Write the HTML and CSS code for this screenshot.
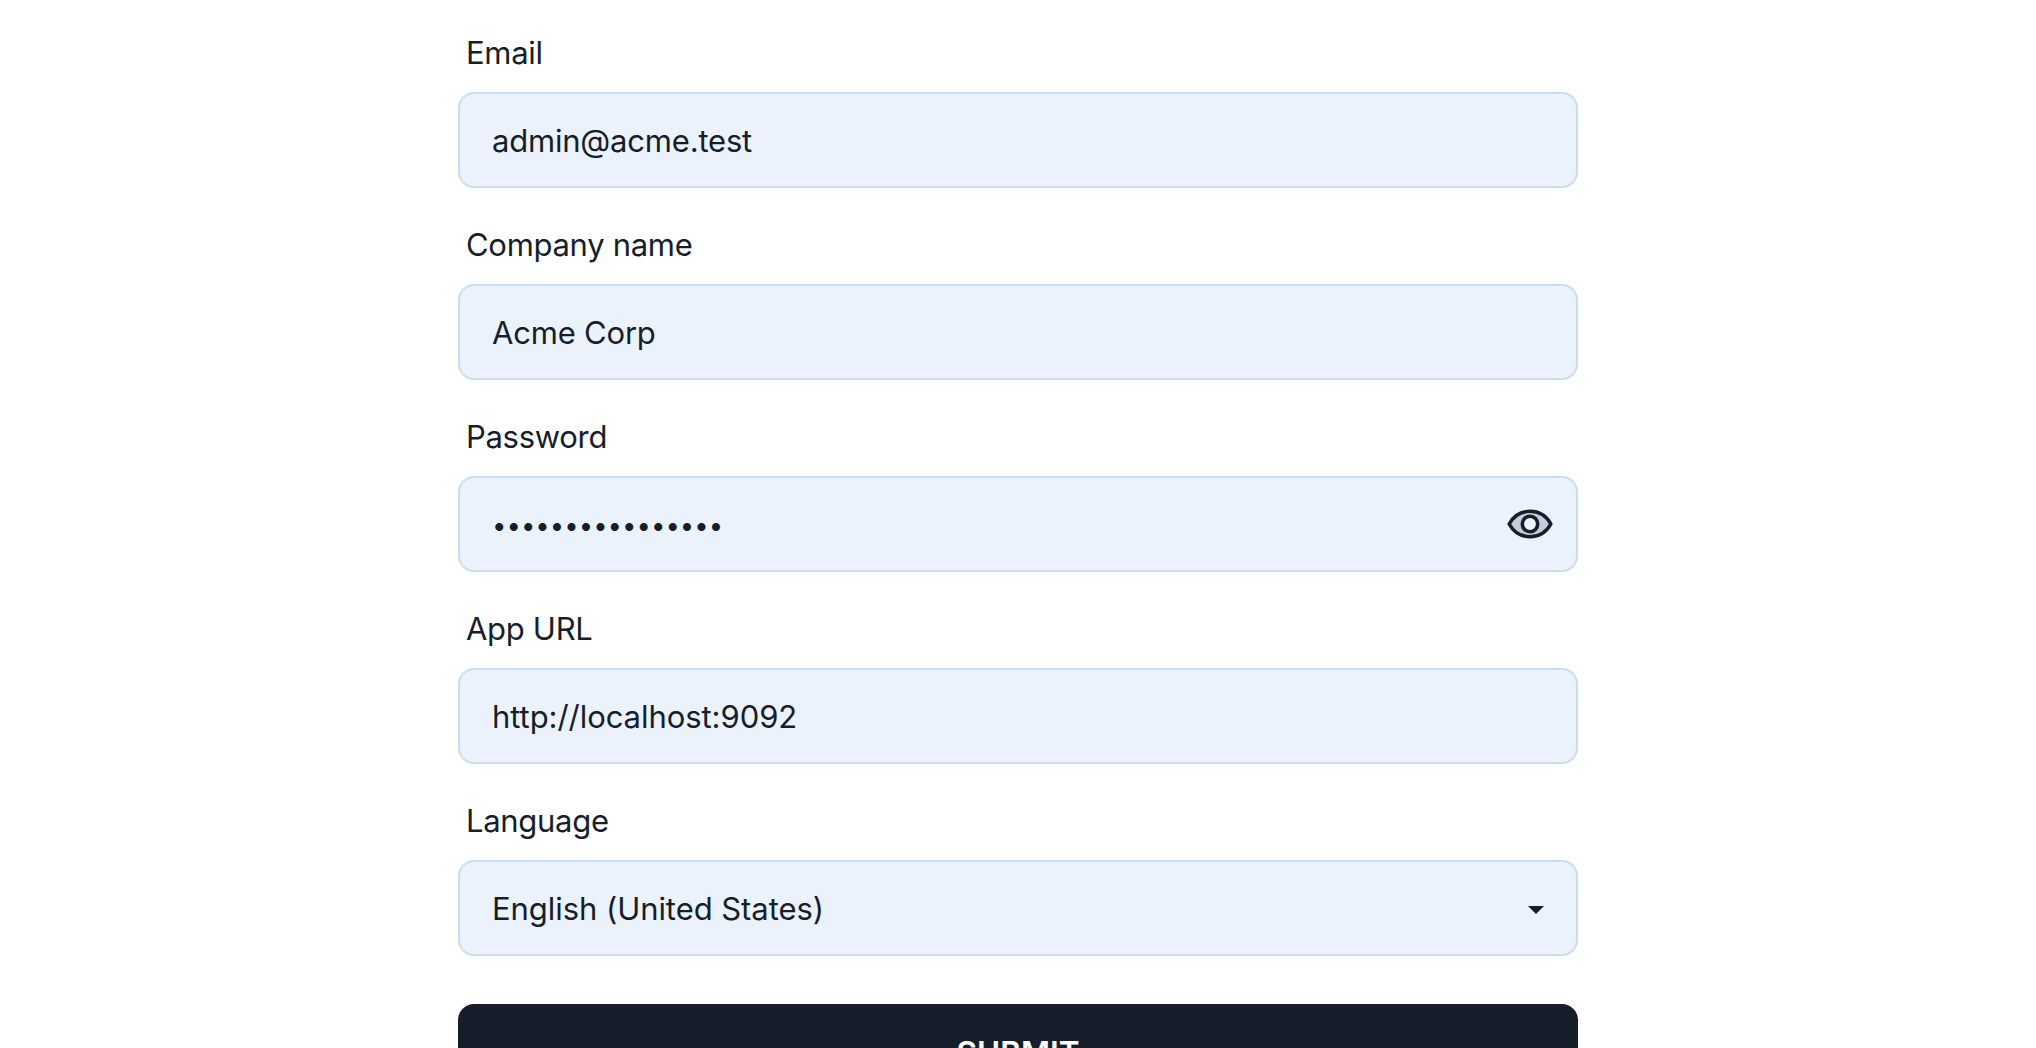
FILE: index.html
```html
<!DOCTYPE html>
<html lang="en">
<head>
<meta charset="utf-8">
<title>Setup</title>
<link rel="stylesheet" href="styles.css">
</head>
<body>
<form class="form">
  <div class="field">
    <label class="label" for="email">Email</label>
    <div class="control"><input class="input" id="email" type="email" value="admin@acme.test"></div>
  </div>
  <div class="field">
    <label class="label" for="company">Company name</label>
    <div class="control"><input class="input" id="company" type="text" value="Acme Corp"></div>
  </div>
  <div class="field">
    <label class="label" for="password">Password</label>
    <div class="control">
      <input class="input password" id="password" type="password" value="abcdefghijklmnop">
      <svg class="eye" viewBox="0 0 24 24" aria-hidden="true">
        <path class="eye-shape" d="M2 12C4.2 8 7.8 5.9 12 5.9s7.8 2.1 10 6.1c-2.2 4-5.8 6.1-10 6.1S4.2 16 2 12Z"/>
        <circle class="eye-pupil" cx="12" cy="12" r="3.7"/>
      </svg>
    </div>
  </div>
  <div class="field">
    <label class="label" for="url">App URL</label>
    <div class="control"><input class="input numeric" id="url" type="text" value="http://localhost:9092"></div>
  </div>
  <div class="field">
    <label class="label" for="language">Language</label>
    <div class="control">
      <select class="input numeric" id="language"><option>English (United States)</option></select>
      <span class="caret"></span>
    </div>
  </div>
  <button class="submit" type="button">SUBMIT</button>
</form>
</body>
</html>
```
FILE: styles.css
```css
* { box-sizing: border-box; }
html, body { margin: 0; height: 100%; background: #fff; overflow: hidden; }
body { font-family: Inter, "Noto Sans", sans-serif; color: #161e2b; }
.form { width: 1120px; margin: 0 auto; padding-top: 32px; display: flex; flex-direction: column; }
.field { display: flex; flex-direction: column; margin-bottom: 36px; }
.label { font-size: 31px; letter-spacing: -0.3px; line-height: 42px; padding-left: 8px; margin-bottom: 18px; }
.control { position: relative; }
.input { display: block; width: 100%; height: 96px; padding: 0 32px; font: inherit; font-size: 31px; letter-spacing: -0.2px; color: #161e2b; background: #ebf2fb; border: 2.6px solid #c9dcf3; border-radius: 16px; outline: none; appearance: none; }
.numeric { letter-spacing: -0.06px; }
.password { font-size: 25.7px; letter-spacing: 0; }
.eye { position: absolute; right: 23px; top: 23px; width: 50px; height: 50px; }
.eye-shape { fill: #c5ccd8; stroke: #161e2b; stroke-width: 1.7; stroke-linejoin: round; }
.eye-pupil { fill: #ebf2fb; stroke: #161e2b; stroke-width: 1.7; }
.caret { position: absolute; right: 34px; top: 46px; width: 0; height: 0; border-left: 8px solid transparent; border-right: 8px solid transparent; border-top: 8px solid #161e2b; }
.submit { height: 96px; margin-top: 12px; border: 0; border-radius: 16px; background: #161e2b; color: #fff; font: inherit; font-size: 31.5px; font-weight: 600; }
```
